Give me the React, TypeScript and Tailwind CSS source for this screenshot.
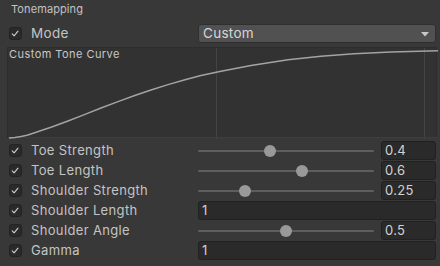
import React from "react";

type Row =
  | { label: string; kind: "slider"; value: number; text: string }
  | { label: string; kind: "field"; text: string };

const rows: Row[] = [
  { label: "Toe Strength", kind: "slider", value: 0.4, text: "0.4" },
  { label: "Toe Length", kind: "slider", value: 0.6, text: "0.6" },
  { label: "Shoulder Strength", kind: "slider", value: 0.25, text: "0.25" },
  { label: "Shoulder Length", kind: "field", text: "1" },
  { label: "Shoulder Angle", kind: "slider", value: 0.5, text: "0.5" },
  { label: "Gamma", kind: "field", text: "1" },
];

// curve points, relative to the curve box (box sits at x=7, y=47)
const curve = [
  [8, 137], [14, 136.6], [20, 135.6], [26, 134.2], [33, 132], [41, 129.3],
  [50, 126.3], [67, 120], [84, 113.4], [100, 107], [117, 100.6], [133, 94.8],
  [150, 89], [167, 83.6], [184, 78.8], [200, 74.6], [220, 70.2], [250, 64.4],
  [287, 58.8], [320, 55.2], [353, 52.8], [390, 51], [437, 49.8],
]
  .map(([x, y]) => `${x - 7},${y - 47}`)
  .join(" ");

function Check() {
  return (
    <div className="flex h-[13px] w-[13px] shrink-0 items-center justify-center rounded-[3px] border border-[#232323] bg-[#2a2a2a]">
      <svg width="13" height="13" viewBox="0 0 13 13" fill="none">
        <path d="M2.6 6.9 L4.9 9.2 L9.4 3.8" stroke="#d0d0d0" strokeWidth="1.3" strokeLinecap="round" strokeLinejoin="round" />
      </svg>
    </div>
  );
}

function Field({ text, className }: { text: string; className?: string }) {
  return (
    <div
      className={`flex h-[19px] items-center rounded-[3px] border border-[#212121] bg-[#2a2a2a] pl-[3px] text-[13px] tracking-[0.3px] text-[#d2d2d2] ${className ?? ""}`}
    >
      {text}
    </div>
  );
}

function Slider({ value }: { value: number }) {
  return (
    <div className="relative flex h-[18px] w-[176px] shrink-0 items-center">
      <div className="h-[2px] w-full rounded-full bg-[#5e5e5e]" />
      <div
        className="absolute top-[3px] h-[12px] w-[12px] rounded-full bg-[#999999]"
        style={{ left: `calc(${value} * (100% - 12px))` }}
      />
    </div>
  );
}

export default function App() {
  return (
    <div
      className="h-[266px] w-[440px] overflow-hidden bg-[#383838] pl-[7px] pr-[4px] text-[#c4c4c4]"
      style={{ fontFamily: "Inter, 'Noto Sans', sans-serif" }}
    >
      {/* header */}
      <div className="flex h-[18px] items-center pl-[4px] text-[11px] leading-[18px] tracking-[0.1px] text-[#c2c2c2]">
        Tonemapping
      </div>

      {/* mode row */}
      <div className="mt-[5px] flex h-[20px] items-center">
        <div className="flex w-[191px] items-center gap-[9px] pl-[2px]">
          <Check />
          <span className="text-[13.5px] tracking-[0.3px]">Mode</span>
        </div>
        <div className="relative flex h-[19px] flex-1 items-center rounded-[3px] border border-[#2f2f2f] bg-[#515151] pl-[4px] text-[13.5px] tracking-[0.3px] text-[#d6d6d6]">
          Custom
          <svg className="absolute right-[6px] top-[7px]" width="8" height="5" viewBox="0 0 8 5">
            <path d="M0 0 H8 L4 4.5 Z" fill="#c8c8c8" />
          </svg>
        </div>
      </div>

      {/* curve box */}
      <div className="relative mt-[4px] h-[91px] w-[430px] border border-[#2d2d2d] bg-[#323232]">
        <svg className="absolute left-0 top-0" width="430" height="91" viewBox="0 0 430 91">
          <line x1="208.5" y1="0" x2="208.5" y2="91" stroke="#444444" strokeWidth="1" />
          <line x1="416.5" y1="0" x2="416.5" y2="91" stroke="#444444" strokeWidth="1" />
          <line x1="0" y1="89.5" x2="430" y2="89.5" stroke="#3e3e3e" strokeWidth="1" />
          <polyline points={curve} fill="none" stroke="#a3a3a3" strokeWidth="1.5" strokeLinejoin="round" />
        </svg>
        <span className="absolute left-[1px] top-[0px] text-[11px] leading-[13px] tracking-[0.45px] text-[#c8c8c8]">
          Custom Tone Curve
        </span>
      </div>

      {/* parameter rows */}
      <div className="mt-[2px] flex flex-col">
        {rows.map((r) => (
          <div key={r.label} className="flex h-[20px] items-center pt-[1px]">
            <div className="flex w-[191px] items-center gap-[9px] pl-[2px]">
              <Check />
              <span className="text-[13px] tracking-[0.35px]">{r.label}</span>
            </div>
            {r.kind === "slider" ? (
              <div className="flex flex-1 items-center gap-[7px]">
                <Slider value={r.value} />
                <Field text={r.text} className="flex-1" />
              </div>
            ) : (
              <Field text={r.text} className="flex-1" />
            )}
          </div>
        ))}
      </div>
    </div>
  );
}
